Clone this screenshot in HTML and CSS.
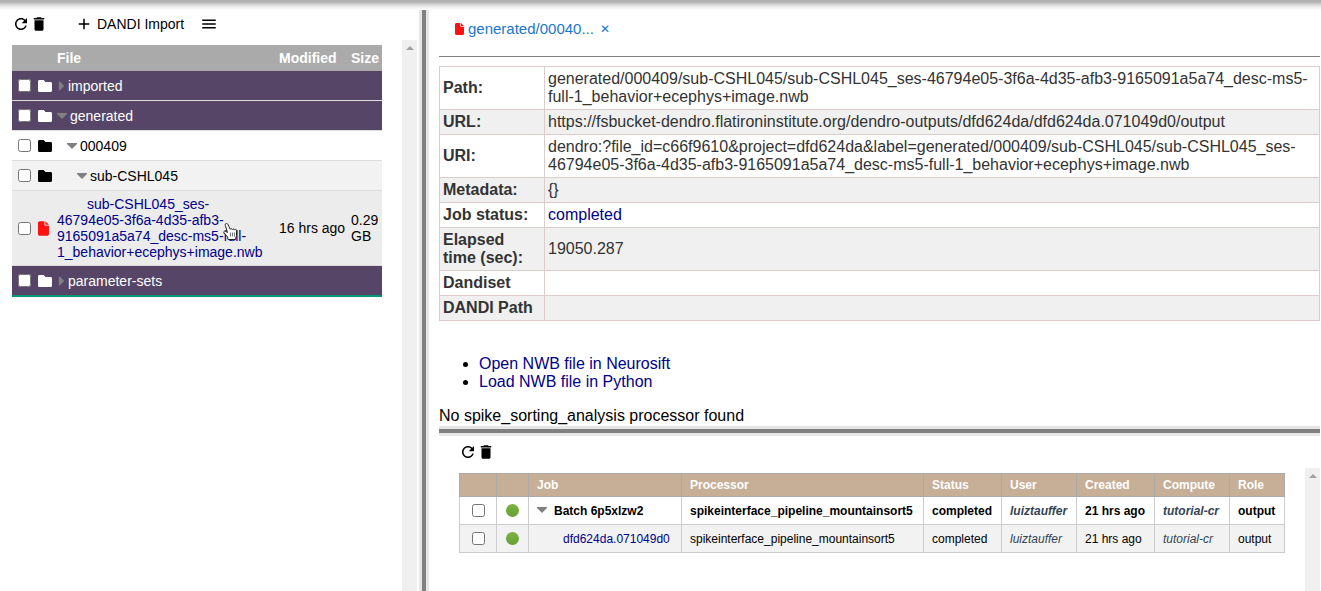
FILE: index.html
```
<!DOCTYPE html>
<html lang="en">
<head>
    <meta charset="utf-8">
    <meta name="viewport" content="width=device-width, initial-scale=1">
    <title>Dendro</title>
    <link rel="stylesheet" href="styles.css">
</head>
<body>
    <!-- Icon definitions -->
    <svg class="icon-defs" aria-hidden="true">
        <symbol id="refresh" viewBox="0 0 24 24"><path d="M17.65 6.35C16.2 4.9 14.21 4 12 4c-4.42 0-7.99 3.58-7.99 8s3.57 8 7.99 8c3.73 0 6.84-2.55 7.73-6h-2.08c-.82 2.33-3.04 4-5.65 4-3.31 0-6-2.69-6-6s2.69-6 6-6c1.66 0 3.14.69 4.22 1.78L13 11h7V4l-2.35 2.35z"/></symbol>
        <symbol id="trash" viewBox="0 0 24 24"><path d="M6 19c0 1.100.9 2 2 2h8c1.100 0 2-.9 2-2V7H6v12zM19 4h-3.500l-1-1h-5l-1 1H5v2h14V4z"/></symbol>
        <symbol id="plus" viewBox="0 0 24 24"><path d="M19 13h-6v6h-2v-6H5v-2h6V5h2v6h6v2z"/></symbol>
        <symbol id="menu" viewBox="0 0 24 24"><path d="M3 18h18v-2H3v2zm0-5h18v-2H3v2zm0-7v2h18V6H3z"/></symbol>
        <symbol id="folder" viewBox="0 64 512 384" preserveAspectRatio="none"><path d="M464 128H272l-54.600-54.600c-6-6-14.100-9.400-22.600-9.400H48C21.500 64 0 85.500 0 112v288c0 26.500 21.500 48 48 48h416c26.500 0 48-21.500 48-48V176c0-26.500-21.500-48-48-48z"/></symbol>
        <symbol id="file" viewBox="0 0 384 512"><path d="M224 128V0H64C28.700 0 0 28.700 0 64v384c0 35.300 28.700 64 64 64h256c35.300 0 64-28.700 64-64V160H256c-17.700 0-32-14.300-32-32zM256 0v128h128L256 0z"/></symbol>
        <symbol id="right" viewBox="0 0 10 10"><path d="M2 0h1l5 5-5 5H2z"/></symbol>
        <symbol id="down" viewBox="0 0 10 10"><path d="M0 2h10v1L5 8 0 3z"/></symbol>
    </svg>
    <div class="top-shadow"></div>
    <div class="main">
        <!-- File browser -->
        <div class="files">
            <div class="toolbar">
                <button class="icon-button" aria-label="Refresh"><svg class="icon"><use href="#refresh"/></svg></button>
                <button class="icon-button" aria-label="Delete"><svg class="icon"><use href="#trash"/></svg></button>
                <button class="import-button"><svg class="icon"><use href="#plus"/></svg>DANDI Import</button>
                <button class="icon-button" aria-label="Menu"><svg class="icon"><use href="#menu"/></svg></button>
            </div>
            <div class="files-body">
                <div class="files-scroll">
                    <table class="file-table">
                        <colgroup><col class="col-check"><col class="col-icon"><col><col class="col-modified"><col class="col-size"></colgroup>
                        <thead>
                            <tr><th></th><th></th><th>File</th><th>Modified</th><th>Size</th></tr>
                        </thead>
                        <tbody>
                            <tr class="top-level">
                                <td class="check"><input type="checkbox" aria-label="imported"></td>
                                <td><svg class="folder"><use href="#folder"/></svg></td>
                                <td><svg class="arrow-right"><use href="#right"/></svg>imported</td><td></td><td></td>
                            </tr>
                            <tr class="top-level">
                                <td class="check"><input type="checkbox" aria-label="generated"></td>
                                <td><svg class="folder"><use href="#folder"/></svg></td>
                                <td><svg class="arrow"><use href="#down"/></svg>generated</td><td></td><td></td>
                            </tr>
                            <tr>
                                <td class="check"><input type="checkbox" aria-label="000409"></td>
                                <td><svg class="folder"><use href="#folder"/></svg></td>
                                <td class="level-1"><svg class="arrow"><use href="#down"/></svg>000409</td><td></td><td></td>
                            </tr>
                            <tr class="shaded">
                                <td class="check"><input type="checkbox" aria-label="sub-CSHL045"></td>
                                <td><svg class="folder"><use href="#folder"/></svg></td>
                                <td class="level-2"><svg class="arrow"><use href="#down"/></svg>sub-CSHL045</td><td></td><td></td>
                            </tr>
                            <tr class="hovered">
                                <td class="check"><input type="checkbox" aria-label="nwb file"></td>
                                <td><svg class="file-icon"><use href="#file"/></svg></td>
                                <td class="file-name"><a href="#">sub-CSHL045_ses-<br>46794e05-3f6a-4d35-afb3-<br>9165091a5a74_desc-ms5-full-<br>1_behavior+ecephys+image.nwb</a>
                                    <svg class="pointer" viewBox="0 0 14 17"><path d="M3.500.5C2.500.5 2 1.300 2.300 2.300L4.500 9.500 2.300 8.200C1.300 7.700.2 8.800 1 9.800L4.500 14l.5 2.500h7.500l1-4V7.300c-.2-1.100-1.600-1.200-2-.4-.2-1-1.700-1.200-2.100-.3-.3-1-1.800-1.100-2.200-.3L5 1.600C4.800.9 4.200.5 3.500.5z" fill="#fff" stroke="#222"/><path d="M7.500 9.500v4M9.500 9.500v4M11.500 9.500v4" stroke="#777" fill="none"/></svg>
                                </td>
                                <td>16 hrs ago</td><td>0.29 GB</td>
                            </tr>
                            <tr class="top-level">
                                <td class="check"><input type="checkbox" aria-label="parameter-sets"></td>
                                <td><svg class="folder"><use href="#folder"/></svg></td>
                                <td><svg class="arrow-right"><use href="#right"/></svg>parameter-sets</td><td></td><td></td>
                            </tr>
                        </tbody>
                    </table>
                </div>
                <div class="scrollbar"></div>
            </div>
        </div>
        <div class="splitter"></div>
        <div class="right">
            <!-- Selected file -->
            <div class="details">
                <div class="tabs">
                    <a class="tab" href="#"><svg class="tab-icon"><use href="#file"/></svg>generated/00040...</a>
                    <button class="tab-close" aria-label="Close tab">✕</button>
                </div>
                <table class="info-table">
                    <colgroup><col class="col-label"><col></colgroup>
                    <tbody>
                        <tr><th>Path:</th><td>generated/000409/sub-CSHL045/sub-CSHL045_ses-46794e05-3f6a-4d35-afb3-9165091a5a74_desc-ms5-full-1_behavior+ecephys+image.nwb</td></tr>
                        <tr><th>URL:</th><td>https://fsbucket-dendro.flatironinstitute.org/dendro-outputs/dfd624da/dfd624da.071049d0/output</td></tr>
                        <tr><th>URI:</th><td>dendro:?file_id=c66f9610&amp;project=dfd624da&amp;label=generated/000409/sub-CSHL045/sub-CSHL045_ses-46794e05-3f6a-4d35-afb3-9165091a5a74_desc-ms5-full-1_behavior+ecephys+image.nwb</td></tr>
                        <tr><th>Metadata:</th><td>{}</td></tr>
                        <tr><th>Job status:</th><td><a href="#">completed</a></td></tr>
                        <tr><th>Elapsed time (sec):</th><td>19050.287</td></tr>
                        <tr><th>Dandiset</th><td></td></tr>
                        <tr><th>DANDI Path</th><td></td></tr>
                    </tbody>
                </table>
                <ul class="links">
                    <li><a href="#">Open NWB file in Neurosift</a></li>
                    <li><a href="#">Load NWB file in Python</a></li>
                </ul>
                <div>No spike_sorting_analysis processor found</div>
            </div>
            <div class="splitter-h"></div>
            <!-- Jobs -->
            <div class="jobs">
                <div class="jobs-toolbar">
                    <button class="icon-button" aria-label="Refresh jobs"><svg class="icon"><use href="#refresh"/></svg></button>
                    <button class="icon-button" aria-label="Delete jobs"><svg class="icon"><use href="#trash"/></svg></button>
                </div>
                <div class="jobs-body">
                    <div class="jobs-scroll">
                        <table class="job-table">
                            <colgroup><col class="job-check"><col class="job-dot"><col class="job-id"><col><col class="job-status"><col class="job-user"><col class="job-created"><col class="job-compute"><col class="job-role"></colgroup>
                            <thead>
                                <tr><th></th><th></th><th>Job</th><th>Processor</th><th>Status</th><th>User</th><th>Created</th><th>Compute</th><th>Role</th></tr>
                            </thead>
                            <tbody>
                                <tr class="batch">
                                    <td class="center"><input type="checkbox" aria-label="Batch 6p5xlzw2"></td>
                                    <td class="center"><span class="dot"></span></td>
                                    <td><svg class="arrow"><use href="#down"/></svg><span class="batch-name">Batch 6p5xlzw2</span></td>
                                    <td>spikeinterface_pipeline_mountainsort5</td><td>completed</td><td class="user">luiztauffer</td><td>21 hrs ago</td><td class="user">tutorial-cr</td><td>output</td>
                                </tr>
                                <tr class="shaded">
                                    <td class="center"><input type="checkbox" aria-label="dfd624da.071049d0"></td>
                                    <td class="center"><span class="dot"></span></td>
                                    <td class="job-link"><a href="#">dfd624da.071049d0</a></td>
                                    <td>spikeinterface_pipeline_mountainsort5</td><td>completed</td><td class="user">luiztauffer</td><td>21 hrs ago</td><td class="user">tutorial-cr</td><td>output</td>
                                </tr>
                            </tbody>
                        </table>
                    </div>
                    <div class="scrollbar"></div>
                </div>
            </div>
        </div>
    </div>
</body>
</html>
```
FILE: styles.css
```
* {
    box-sizing: border-box;
}

body {
    margin: 0;
    height: 100vh;
    display: flex;
    flex-direction: column;
    overflow: hidden;
    background: #fff;
    color: #000;
    font: 16px/18px "Liberation Sans", Arial, sans-serif;
}

a {
    color: darkblue;
    text-decoration: none;
}

button {
    border: 0;
    padding: 0;
    background: none;
    font: inherit;
    color: inherit;
}

svg {
    fill: currentColor;
}

input[type=checkbox] {
    display: block;
    width: 13px;
    height: 13px;
    margin: 0;
}

table {
    border-collapse: collapse;
    table-layout: fixed;
    width: 100%;
}

th {
    text-align: left;
}

.icon-defs {
    display: none;
}

.top-shadow {
    flex: none;
    height: 10px;
    background: linear-gradient(#b0b0b0, #b4b4b4 20%, #e6e6e6 60%, #fff);
}

.main {
    flex: 1;
    display: flex;
    min-height: 0;
}

/* file browser */
.files {
    flex: 0 0 419px;
    display: flex;
    flex-direction: column;
    padding: 0 2px 0 12px;
    font-size: 14px;
}

.toolbar {
    display: flex;
    align-items: center;
    height: 30px;
    padding-bottom: 2px;
}

.icon {
    display: block;
    width: 18px;
    height: 18px;
}

.import-button {
    display: flex;
    align-items: center;
    gap: 4px;
    margin: 0 16px 0 27px;
}

.files-body {
    flex: 1;
    display: flex;
}

.files-scroll {
    flex: 1;
    padding: 5px 20px 0 0;
}

.scrollbar {
    flex: 0 0 15px;
    background: #f0f0f0;
}

.scrollbar::before {
    content: "";
    display: block;
    width: 0;
    margin: 6px auto;
    border: 4px solid transparent;
    border-top: 0;
    border-bottom-color: #a0a0a0;
}

.col-check {
    width: 25px;
}

.col-icon {
    width: 20px;
}

.col-modified {
    width: 72px;
}

.col-size {
    width: 31px;
}

.file-table {
    border-collapse: separate;
    border-spacing: 0;
    line-height: 16px;
}

.file-table th {
    height: 26px;
    padding: 0;
    background: #aaa;
    color: #fff;
}

.file-table td {
    height: 30px;
    padding: 0;
    border-bottom: 1px solid #ddd;
}

.file-table .check {
    padding-left: 6px;
}

.file-table .top-level {
    background: #564566;
    color: #fff;
}

.file-table .top-level:last-child td {
    height: 31px;
    border-bottom: 2px solid #009879;
}

.file-table .hovered {
    background: #ececec;
}

.file-table .hovered td {
    padding: 5px 0;
}

.file-table .hovered .check {
    padding-left: 6px;
}

.shaded {
    background: #f2f2f2;
}

.file-table .level-1 {
    padding-left: 10px;
}

.file-table .level-2 {
    padding-left: 20px;
}

.folder {
    display: block;
    width: 14px;
    height: 12px;
    margin-left: 1px;
}

.file-icon {
    display: block;
    width: 11px;
    height: 15px;
    margin-left: 1px;
    color: #f11;
}

.arrow {
    width: 10px;
    height: 10px;
    margin-right: 3px;
    color: gray;
}

.arrow-right {
    width: 9px;
    height: 10px;
    margin-right: 2px;
    color: gray;
}

.file-name {
    position: relative;
    text-indent: 30px;
}

.file-name a {
    display: block;
    white-space: nowrap;
}

.pointer {
    position: absolute;
    left: 166px;
    top: 32px;
    width: 14px;
    height: 17px;
}

.splitter {
    flex: 0 0 10px;
    background: gray;
    border: solid #e6e6e6;
    border-width: 0 3px;
}

/* right side */
.right {
    flex: 1;
    min-width: 0;
    display: flex;
    flex-direction: column;
    padding: 0 1px 0 10px;
}

.tabs {
    display: flex;
    align-items: center;
    gap: 6px;
    height: 47px;
    padding: 0 0 8px 16px;
    margin-bottom: 9px;
    border-bottom: 1px solid gray;
    color: #1976d2;
}

.tab {
    display: flex;
    align-items: center;
    gap: 4px;
    color: inherit;
    font-size: 15px;
}

.tab-icon {
    width: 9px;
    height: 12px;
    color: #f11;
}

.tab-close {
    font: 12px/14px "DejaVu Sans", sans-serif;
}

.col-label {
    width: 105px;
}

.info-table {
    color: #333;
}

.info-table th,
.info-table td {
    height: 25px;
    padding: 3px;
    border: 1px solid #dcc;
    overflow-wrap: break-word;
}

.info-table tr:nth-child(even) {
    background: #f0f0f0;
}

.links {
    margin: 34px 0 16px;
    padding-left: 40px;
}

.splitter-h {
    flex: 0 0 10px;
    margin-top: 1px;
    background: gray;
    border: solid #e6e6e6;
    border-width: 3px 0;
}

/* jobs */
.jobs {
    flex: 1;
    display: flex;
    flex-direction: column;
    padding-left: 20px;
    font-size: 12px;
}

.jobs-toolbar {
    display: flex;
    align-items: center;
    height: 32px;
}

.jobs-body {
    flex: 1;
    display: flex;
}

.jobs-scroll {
    flex: 1;
    padding: 5px 20px 0 0;
}

.job-check {
    width: 37px;
}

.job-dot {
    width: 32px;
}

.job-id {
    width: 153px;
}

.job-status {
    width: 78px;
}

.job-created {
    width: 78px;
}

.job-user,
.job-compute {
    width: 75px;
}

.job-role {
    width: 55px;
}

.job-table th,
.job-table td {
    height: 28px;
    padding: 0 0 0 8px;
    border: 1px solid #ccc;
    white-space: nowrap;
}

.job-table th {
    height: 23px;
    background: #c7ae97;
    border-color: #aaa;
    color: #fff;
}

.job-table .center {
    padding: 0;
}

.center input,
.dot {
    margin: 0 auto;
}

.batch {
    font-weight: bold;
}

.batch-name {
    margin-left: 4px;
}

.user {
    font-style: italic;
    color: #345;
}

.job-table .job-link {
    padding-left: 34px;
}

.dot {
    display: block;
    width: 13px;
    height: 13px;
    border-radius: 50%;
    background: linear-gradient(#7cb342, #689f38);
}
```
